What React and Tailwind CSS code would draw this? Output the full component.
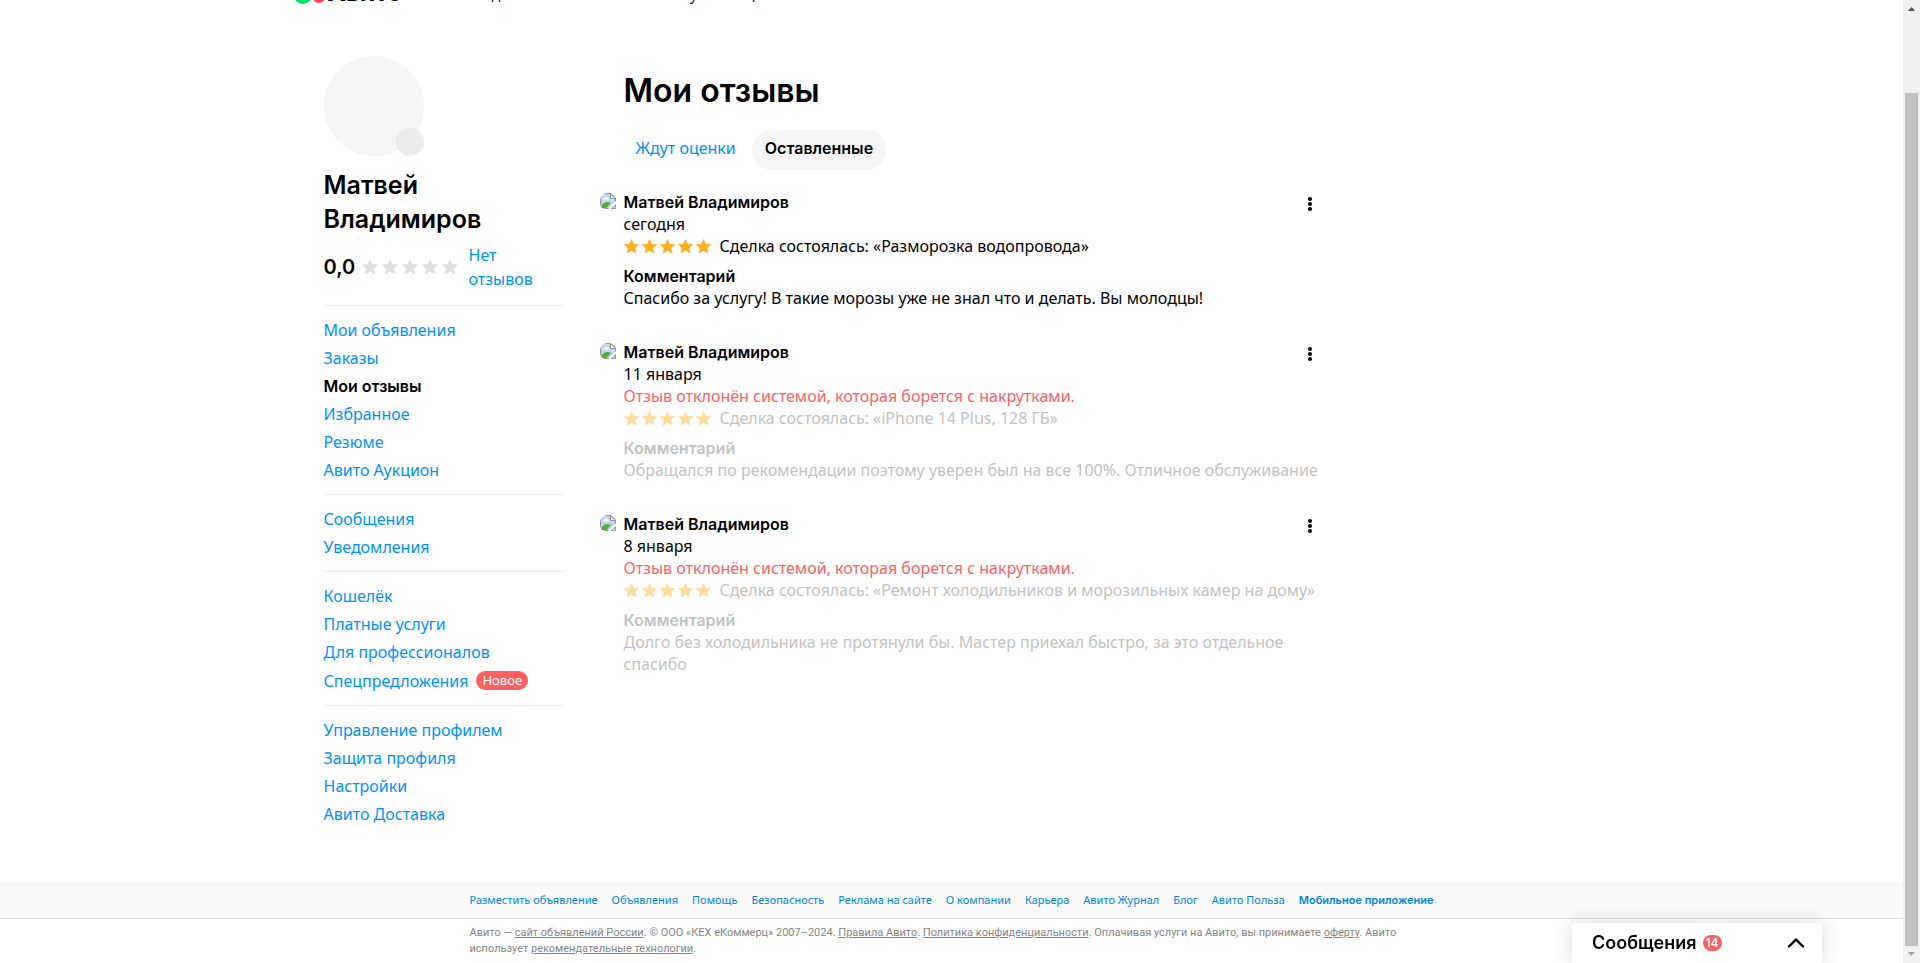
const STAR = 'M10 0.8 L12.7 6.9 L19.4 7.5 L14.4 11.9 L15.9 18.6 L10 15.1 L4.1 18.6 L5.6 11.9 L0.6 7.5 L7.3 6.9 Z';

const menuGroups = [
  ['Мои объявления', 'Заказы', 'Мои отзывы', 'Избранное', 'Резюме', 'Авито Аукцион'],
  ['Сообщения', 'Уведомления'],
  ['Кошелёк', 'Платные услуги', 'Для профессионалов', 'Спецпредложения'],
  ['Управление профилем', 'Защита профиля', 'Настройки', 'Авито Доставка'],
];

const reviews = [
  {
    date: 'сегодня',
    item: 'Сделка состоялась: «Разморозка водопровода»',
    comment: 'Спасибо за услугу! В такие морозы уже не знал что и делать. Вы молодцы!',
  },
  {
    date: '11 января',
    rejected: true,
    item: 'Сделка состоялась: «iPhone 14 Plus, 128 ГБ»',
    comment: 'Обращался по рекомендации поэтому уверен был на все 100%. Отличное обслуживание',
  },
  {
    date: '8 января',
    rejected: true,
    item: 'Сделка состоялась: «Ремонт холодильников и морозильных камер на дому»',
    comment: 'Долго без холодильника не протянули бы. Мастер приехал быстро, за это отдельное спасибо',
  },
];

const footerLinks = [
  'Разместить объявление', 'Объявления', 'Помощь', 'Безопасность', 'Реклама на сайте',
  'О компании', 'Карьера', 'Авито Журнал', 'Блог', 'Авито Польза',
];

function Star({ className }) {
  return (
    <svg viewBox="0 0 20 20" className={className} aria-hidden="true">
      <path d={STAR} fill="currentColor" stroke="currentColor" strokeWidth="1" strokeLinejoin="round" />
    </svg>
  );
}

function BrokenImage() {
  return (
    <svg viewBox="0 0 16 16" className="mt-0.5 size-4 shrink-0 rounded-tl-lg rounded-tr-md rounded-bl-md" aria-hidden="true">
      <path d="M0.5 0.5 H11 L15.5 5 V15.5 H0.5 Z" fill="#c3d5f6" stroke="#8f8f8f" />
      <path d="M3 6.5 Q3 5 4.5 5 Q5 3.5 6.5 4 Q8 4 8 5.5 Q9 5.5 9 6.5 Z" fill="#fff" />
      <path d="M1 15 V13 Q4 9 7.5 9 Q10 9 11 10 L6.5 15 Z" fill="#56b034" />
      <path d="M10.5 0.5 V5.5 H15.5 Z" fill="#fff" stroke="#8f8f8f" />
      <path d="M8 16 L16 8 V11 L11 16 Z" fill="#fff" />
      <path d="M11.5 15.5 L15.5 12 V15.5 Z" fill="#d5e0f5" stroke="#9a9a9a" />
    </svg>
  );
}

function Header() {
  return (
    <header className="flex h-[5px] items-end overflow-hidden">
      <div className="mx-auto flex w-full max-w-[1316px] items-end">
        <a href="#home" className="flex w-[107px] shrink-0 items-end text-black" aria-label="Авито">
          <svg viewBox="0 0 34 34" className="mb-px size-[34px] shrink-0" aria-hidden="true">
            <circle cx="9" cy="25" r="9" fill="#04e061" />
            <circle cx="25" cy="27" r="6" fill="#ff4053" />
            <circle cx="8" cy="9" r="4" fill="#965eeb" />
            <circle cx="23" cy="10" r="10" fill="#00aaff" />
          </svg>
          <span className="-mb-1 font-['Inter',sans-serif] text-2xl font-extrabold">Авито</span>
        </a>
        <nav className="ml-5 flex gap-[22px] text-sm leading-5 text-black">
          <a href="#auto">Авто</a>
          <a href="#realty">Недвижимость</a>
          <a href="#jobs">Работа</a>
          <a href="#services">Услуги</a>
          <a href="#more">ещё</a>
        </nav>
      </div>
    </header>
  );
}

function Sidebar() {
  return (
    <aside className="w-60 shrink-0 pt-[51px]">
      <div className="relative size-[100px] rounded-full bg-[#f5f5f5]">
        <button type="button" aria-label="Изменить фото" className="absolute right-0 bottom-0 size-7 rounded-full bg-[#ebebeb]" />
      </div>
      <h2 className="mt-3 w-40 font-['Inter',sans-serif] text-[25px] leading-[34px] font-semibold">Матвей Владимиров</h2>
      <div className="mt-[7px] flex items-center pb-[14px]">
        <span className="w-[38px] font-['Inter',sans-serif] text-xl font-semibold">0,0</span>
        <span className="flex gap-1 text-[#e0e0e0]">
          {[0, 1, 2, 3, 4].map((i) => <Star key={i} className="size-4" />)}
        </span>
        <a href="#reviews" className="ml-[11px] w-20 leading-6 text-[#0091ff]">Нет отзывов</a>
      </div>
      <nav>
        {menuGroups.map((group) => (
          <ul key={group[0]} className="border-t border-[#ebebeb] py-2.5">
            {group.map((label) => (
              <li key={label} className="flex min-h-7 items-center">
                {label === 'Мои отзывы' ? (
                  <a href="#my-reviews" aria-current="page" className="font-['Inter',sans-serif] font-semibold">{label}</a>
                ) : (
                  <a href="#menu" className="text-[#0091ff]">{label}</a>
                )}
                {label === 'Спецпредложения' && (
                  <span className="my-[5px] ml-2 rounded-full bg-[#ff6163] px-1.5 text-[13px] leading-[19px] text-white">Новое</span>
                )}
              </li>
            ))}
          </ul>
        ))}
      </nav>
    </aside>
  );
}

function Review({ date, rejected, item, comment }) {
  return (
    <article className="flex items-start leading-[22px]">
      <BrokenImage />
      <div className="ml-2 min-w-0 flex-1">
        <div className="flex items-center justify-between pr-3">
          <h3 className="font-['Inter',sans-serif] font-semibold">Матвей Владимиров</h3>
          <button type="button" aria-label="Действия" className="flex h-[22px] w-3 items-center justify-center">
            <svg viewBox="0 0 4 16" className="mt-1 h-4 w-1" aria-hidden="true">
              <circle cx="2" cy="3" r="2" />
              <circle cx="2" cy="8" r="2" />
              <circle cx="2" cy="13" r="2" />
            </svg>
          </button>
        </div>
        <p>{date}</p>
        {rejected && <p className="text-[#ff6163]">Отзыв отклонён системой, которая борется с накрутками.</p>}
        <div className={rejected ? 'text-[#c2c2c2]' : ''}>
          <div className="flex items-center whitespace-nowrap">
            <span className={rejected ? 'flex w-24 gap-[3px] text-[#ffdb9e]' : 'flex w-24 gap-[3px] text-[#ffb021]'}>
              {[0, 1, 2, 3, 4].map((i) => <Star key={i} className="size-[15px]" />)}
            </span>
            <p>{item}</p>
          </div>
          <h4 className="mt-2 font-['Inter',sans-serif] font-semibold">Комментарий</h4>
          <p>{comment}</p>
        </div>
      </div>
    </article>
  );
}

function Footer() {
  return (
    <footer className="mt-11 text-[11px] leading-4">
      <div className="border-b border-[#dedede] bg-[#fafafa]">
        <nav className="mx-auto flex h-9 w-full max-w-[964px] items-center justify-between whitespace-nowrap text-[#0084db]">
          {footerLinks.map((label) => <a key={label} href="#footer">{label}</a>)}
          <a href="#app" className="font-['Inter',sans-serif] font-semibold">Мобильное приложение</a>
        </nav>
      </div>
      <p className="mx-auto w-full max-w-[964px] pt-1.5 pb-1.5 font-['Roboto',sans-serif] text-[#858585]">
        Авито — <a href="#site" className="underline">сайт объявлений России</a>. © ООО «КЕХ еКоммерц» 2007–2024.{' '}
        <a href="#rules" className="underline">Правила Авито</a>.{' '}
        <a href="#privacy" className="underline">Политика конфиденциальности</a>. Оплачивая услуги на Авито, вы принимаете{' '}
        <a href="#offer" className="underline">оферту</a>. Авито<br />
        использует <a href="#tech" className="underline">рекомендательные технологии</a>.
      </p>
    </footer>
  );
}

function ScrollRail() {
  return (
    <div className="sticky top-0 flex h-screen w-[17px] shrink-0 flex-col items-center bg-[#f0f0f0]" aria-hidden="true">
      <svg viewBox="0 0 17 17" className="size-[17px]"><path d="M5 11 L8.5 7 L12 11 Z" fill="#505050" /></svg>
      <div className="mt-[76px] w-[13px] flex-1 bg-[#c1c1c1]" />
      <svg viewBox="0 0 17 17" className="size-[17px]"><path d="M5 6 L8.5 10 L12 6 Z" fill="#a3a3a3" /></svg>
    </div>
  );
}

export default function App() {
  return (
    <div className="flex bg-white font-['Noto_Sans',sans-serif] text-base text-black">
      <div className="min-w-0 flex-1">
        <Header />
        <div className="mx-auto flex w-full max-w-[1256px]">
          <Sidebar />
          <main className="ml-9 w-[728px] pt-[66px]">
            <h1 className="ml-6 font-['Inter',sans-serif] text-[32px] leading-10 font-semibold">Мои отзывы</h1>
            <div className="mt-[19px] ml-6 flex gap-1" role="tablist">
              <button type="button" role="tab" aria-selected="false" className="h-10 rounded-full px-3 pb-1 text-[#0091ff]">Ждут оценки</button>
              <button type="button" role="tab" aria-selected="true" className="h-10 rounded-full bg-[#f5f5f5] px-[13px] pb-1 font-['Inter',sans-serif] font-semibold">Оставленные</button>
            </div>
            <div className="mt-[21px] flex flex-col gap-8">
              {reviews.map((review) => <Review key={review.date} {...review} />)}
            </div>
          </main>
        </div>
        <Footer />
      </div>
      <ScrollRail />
      <button
        type="button"
        className="fixed right-[98px] bottom-0 flex h-10 w-[250px] items-center rounded-t bg-white pr-[17px] pl-5 shadow-[0_0_20px_rgba(0,0,0,0.16)]"
      >
        <span className="font-['Inter',sans-serif] text-lg leading-6 font-semibold">Сообщения</span>
        <span className="ml-1.5 rounded-full bg-[#ff6163] px-[3px] font-['Inter',sans-serif] text-xs leading-4 font-semibold text-white">14</span>
        <svg viewBox="0 0 18 18" className="ml-auto size-[18px]" fill="none" aria-hidden="true">
          <path d="M2 12.5 L9 5.5 L16 12.5" stroke="currentColor" strokeWidth="2.4" strokeLinecap="round" strokeLinejoin="round" />
        </svg>
      </button>
    </div>
  );
}
